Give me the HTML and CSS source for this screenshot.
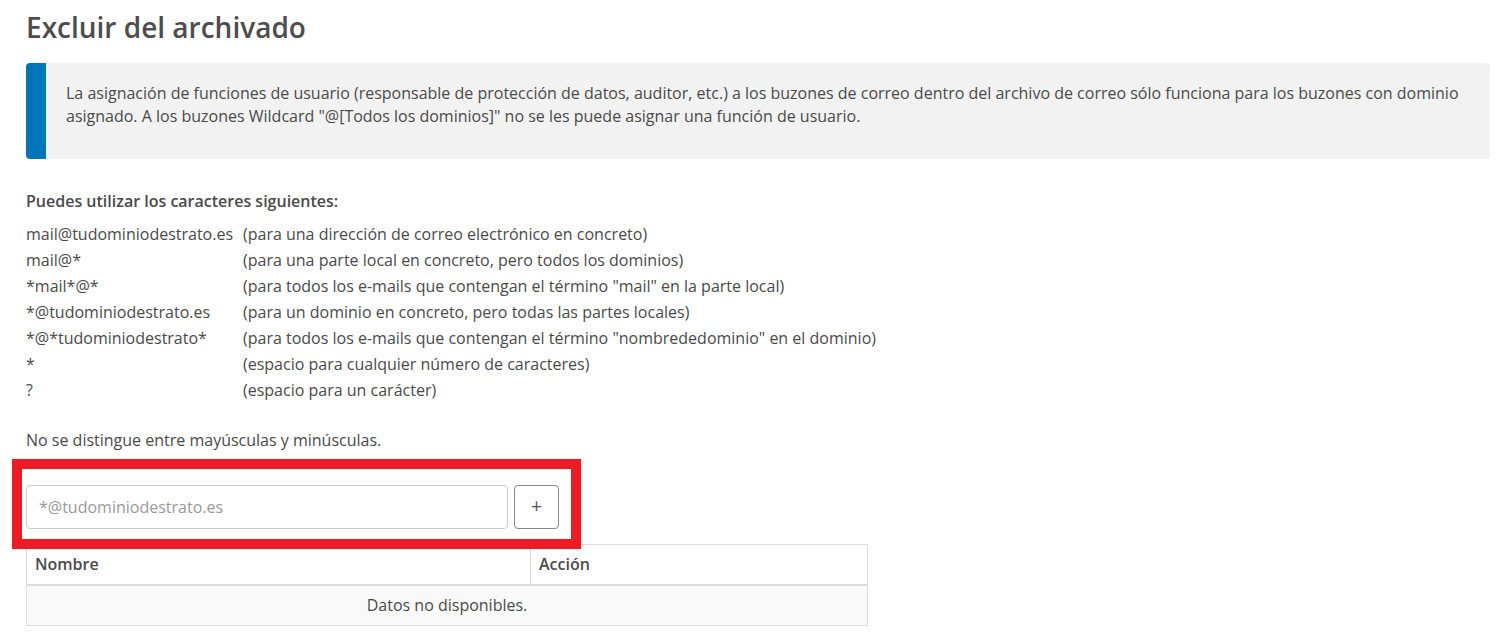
FILE: index.html
```html
<!DOCTYPE html>
<html lang="es">
<head>
<meta charset="utf-8">
<title>Excluir del archivado</title>
<link rel="stylesheet" href="styles.css">
</head>
<body>
<main class="page">
  <h1 class="title">Excluir del archivado</h1>

  <div class="notice">
    <div class="notice-bar"></div>
    <p class="notice-text">La asignación de funciones de usuario (responsable de protección de datos, auditor, etc.) a los buzones de correo dentro del archivo de correo sólo funciona para los buzones con dominio asignado. A los buzones Wildcard "@[Todos los dominios]" no se les puede asignar una función de usuario.</p>
  </div>

  <p class="chars-title">Puedes utilizar los caracteres siguientes:</p>
  <div class="chars">
    <span>mail@tudominiodestrato.es</span><span>(para una dirección de correo electrónico en concreto)</span>
    <span>mail@*</span><span>(para una parte local en concreto, pero todos los dominios)</span>
    <span>*mail*@*</span><span>(para todos los e-mails que contengan el término "mail" en la parte local)</span>
    <span>*@tudominiodestrato.es</span><span>(para un dominio en concreto, pero todas las partes locales)</span>
    <span>*@*tudominiodestrato*</span><span>(para todos los e-mails que contengan el término "nombrededominio" en el dominio)</span>
    <span>*</span><span>(espacio para cualquier número de caracteres)</span>
    <span>?</span><span>(espacio para un carácter)</span>
  </div>

  <p class="case-note">No se distingue entre mayúsculas y minúsculas.</p>

  <div class="add-row">
    <input class="add-input" type="text" placeholder="*@tudominiodestrato.es">
    <button class="add-btn" type="button">+</button>
    <div class="highlight"></div>
  </div>

  <table class="list">
    <thead>
      <tr><th class="col-name">Nombre</th><th class="col-action">Acción</th></tr>
    </thead>
    <tbody>
      <tr><td class="empty" colspan="2">Datos no disponibles.</td></tr>
    </tbody>
  </table>
</main>
</body>
</html>
```

FILE: styles.css
```css
* { box-sizing: border-box; }

html, body {
  margin: 0;
  padding: 0;
  background: #fff;
}

body {
  font-family: "Open Sans", "Liberation Sans", sans-serif;
  font-size: 16px;
  color: #4a4a4a;
}

.page {
  padding: 0 17px 0 26px;
}

.title {
  margin: 10px 0 19px;
  font-size: 28px;
  line-height: 34px;
  font-weight: 600;
  color: #4d4d4d;
}

.notice {
  display: flex;
  background: #f2f2f2;
  border-radius: 4px;
  overflow: hidden;
  height: 96px;
}

.notice-bar {
  width: 20px;
  flex: none;
  background: #0075b8;
}

.notice-text {
  margin: 0;
  padding: 19px 8px 0 20px;
  line-height: 23px;
}

.chars-title {
  margin: 29px 0 7px;
  font-weight: 600;
  line-height: 26px;
}

.chars {
  display: grid;
  grid-template-columns: 217px auto;
  line-height: 26px;
}

.case-note {
  margin: 24px 0 0;
  line-height: 26px;
}

.add-row {
  position: relative;
  display: flex;
  gap: 6px;
  margin-top: 32px;
  width: 533px;
}

.add-input {
  width: 482px;
  height: 44px;
  border: 1px solid #ccc;
  border-radius: 4px;
  padding: 0 12px;
  font-family: inherit;
  font-size: 16px;
  color: #4a4a4a;
  background: #fff;
}

.add-input::placeholder {
  color: #9a9a9a;
}

.add-btn {
  width: 45px;
  height: 44px;
  border: 1px solid #888;
  border-radius: 4px;
  background: #fff;
  color: #555;
  font-family: inherit;
  font-size: 20px;
  line-height: 1;
  padding: 0 0 2px;
}

.highlight {
  position: absolute;
  left: -14px;
  top: -26px;
  width: 569px;
  height: 90px;
  border: 10px solid #ed1c24;
  pointer-events: none;
}

.list {
  margin-top: 15px;
  width: 842px;
  border-collapse: collapse;
  border: 1px solid #ddd;
}

.list th {
  text-align: left;
  font-weight: 600;
  height: 40px;
  padding: 0 8px;
  border-bottom: 2px solid #ddd;
  line-height: 20px;
}

.col-name {
  width: 504px;
  border-right: 1px solid #ddd;
}

.list td.empty {
  height: 41px;
  background: #f9f9f9;
  text-align: center;
  padding: 0 8px;
}
```
